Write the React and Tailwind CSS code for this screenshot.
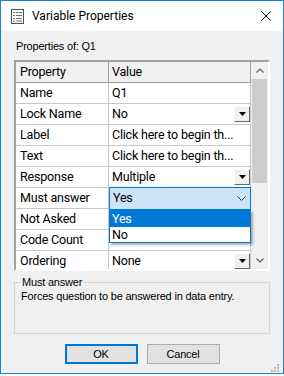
import React from 'react';

const rows = [
  { name: 'Name', value: 'Q1' },
  { name: 'Lock Name', value: 'No', drop: true },
  { name: 'Label', value: 'Click here to begin th...' },
  { name: 'Text', value: 'Click here to begin th...' },
  { name: 'Response', value: 'Multiple', drop: true },
  { name: 'Must answer', value: 'Yes', combo: true },
  { name: 'Not Asked', value: '' },
  { name: 'Code Count', value: '' },
  { name: 'Ordering', value: 'None', drop: true },
];

const DropButton = () => (
  <div className="ml-auto w-[16px] h-[16px] shrink-0 bg-[#f0f0f0] border border-t-white border-l-white border-r-[#696969] border-b-[#696969] flex items-center justify-center">
    <svg width="7" height="4" viewBox="0 0 7 4">
      <path d="M0 0h7L3.5 4z" fill="#000" />
    </svg>
  </div>
);

const ComboOpen = ({ value }) => (
  <>
    <div className="absolute left-0 top-[-1px] w-[142px] h-[23px] border border-[#0078d7] bg-[#cce4f7] flex items-center pl-[3px] pr-[4px] z-10">
      <span>{value}</span>
      <svg className="ml-auto" width="9" height="5" viewBox="0 0 9 5">
        <path d="M0.5 0.5L4.5 4.5L8.5 0.5" fill="none" stroke="#404040" strokeWidth="1" />
      </svg>
    </div>
    <div className="absolute left-0 top-[22px] w-[142px] border border-[#0078d7] bg-white shadow-[2px_2px_2px_rgba(0,0,0,0.3)] z-10 leading-[15px]">
      <div className="h-[16px] bg-[#0078d7] text-white pl-[2px]">Yes</div>
      <div className="h-[15px] pl-[2px]">No</div>
    </div>
  </>
);

const PropertyGrid = () => (
  <div className="mt-[7px] h-[211px] border-2 border-t-[#a0a0a0] border-l-[#a0a0a0] border-r-white border-b-white flex overflow-hidden">
    <div className="w-[235px] flex flex-col text-[12.5px] text-black font-['Roboto',sans-serif] bg-white">
      <div className="h-[21px] shrink-0 flex bg-[#f0f0f0] border-b border-[#a0a0a0]">
        <div className="w-[93px] border-r border-[#a0a0a0] pl-[4px] leading-[20px]">Property</div>
        <div className="w-[142px] border-r border-[#a0a0a0] pl-[3px] leading-[20px]">Value</div>
      </div>
      {rows.map((r) => (
        <div key={r.name} className="h-[21px] shrink-0 flex border-b border-[#c8c8c8]">
          <div className="w-[93px] border-r border-[#c8c8c8] pl-[4px] leading-[20px] whitespace-nowrap overflow-hidden">
            {r.name}
          </div>
          <div className="relative w-[142px] border-r border-[#c8c8c8] pl-[3px] flex items-center whitespace-nowrap">
            {r.combo ? <ComboOpen value={r.value} /> : <span className="leading-[20px]">{r.value}</span>}
            {r.drop && <DropButton />}
          </div>
        </div>
      ))}
    </div>
    <div className="w-[18px] bg-[#f0f0f0] flex flex-col">
      <div className="h-[17px] flex items-center justify-center">
        <svg width="8" height="5" viewBox="0 0 8 5">
          <path d="M0.5 4.5L4 1L7.5 4.5" fill="none" stroke="#606060" strokeWidth="1.2" />
        </svg>
      </div>
      <div className="mx-[1px] h-[104px] bg-[#cdcdcd]" />
      <div className="flex-1" />
      <div className="h-[17px] flex items-center justify-center">
        <svg width="8" height="5" viewBox="0 0 8 5">
          <path d="M0.5 0.5L4 4L7.5 0.5" fill="none" stroke="#606060" strokeWidth="1.2" />
        </svg>
      </div>
    </div>
  </div>
);

export default function App() {
  return (
    <div className="w-[284px] h-[376px] bg-white">
      <div className="w-[284px] h-[374px] border border-[#1883d7] flex flex-col bg-[#f0f0f0] relative">
        <div className="h-[30px] shrink-0 bg-white flex items-center pl-[10px] pr-[12px]">
          <svg width="13" height="15" viewBox="0 0 13 15">
            <rect x="0.5" y="0.5" width="12" height="14" fill="none" stroke="#505050" />
            <path d="M2 3.5h2M5 3.5h6M2 6.5h2M5 6.5h6M2 9.5h2M5 9.5h6M2 12h2M5 12h6" stroke="#707070" strokeWidth="1" />
          </svg>
          <span className="ml-[8px] text-[12px] text-black font-['Roboto',sans-serif]">Variable Properties</span>
          <svg className="ml-auto" width="10" height="10" viewBox="0 0 10 10">
            <path d="M0.5 0.5L9.5 9.5M9.5 0.5L0.5 9.5" stroke="#000" strokeWidth="1" />
          </svg>
        </div>
        <div className="flex-1 flex flex-col px-[13px] text-[11px] text-black font-['Liberation_Sans',Arial,sans-serif] tracking-[-0.2px]">
          <div className="pt-[9px] pl-[2px] leading-[13px]">Properties of: Q1</div>
          <PropertyGrid />
          <fieldset className="mt-[5px] h-[58px] border border-[#d5d5d5] px-[6px]">
            <legend className="px-[1px] leading-[13px]">Must answer</legend>
            <div className="leading-[13px] mt-[1px]">Forces question to be answered in data entry.</div>
          </fieldset>
          <div className="mt-[10px] flex justify-center gap-[9px]">
            <button className="w-[73px] h-[20px] bg-[#e1e1e1] border-2 border-[#0078d7] leading-[16px]">OK</button>
            <button className="w-[73px] h-[20px] bg-[#e1e1e1] border border-[#adadad] leading-[18px]">Cancel</button>
          </div>
        </div>
        <svg className="absolute right-[4px] bottom-[1px]" width="8" height="8" viewBox="0 0 8 8">
          <rect x="6" y="0" width="2" height="2" fill="#bcbcbc" />
          <rect x="3" y="3" width="2" height="2" fill="#bcbcbc" />
          <rect x="6" y="3" width="2" height="2" fill="#bcbcbc" />
          <rect x="0" y="6" width="2" height="2" fill="#bcbcbc" />
          <rect x="3" y="6" width="2" height="2" fill="#bcbcbc" />
          <rect x="6" y="6" width="2" height="2" fill="#bcbcbc" />
        </svg>
      </div>
    </div>
  );
}
